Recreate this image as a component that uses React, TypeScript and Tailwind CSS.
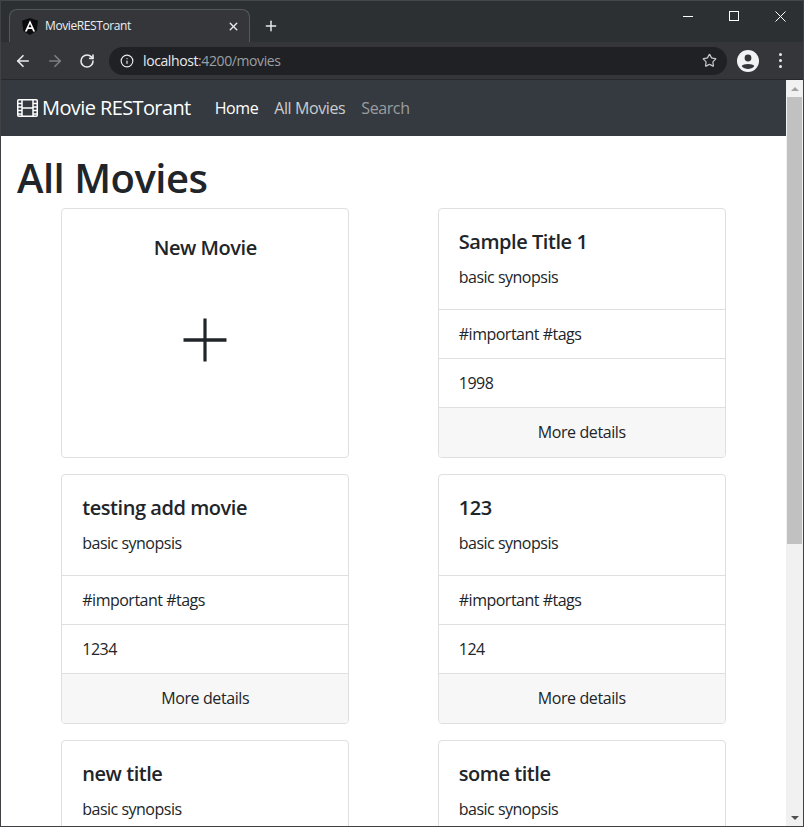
import React from 'react';
import { ArrowLeft, ArrowRight, RotateCw, Info, Star, X, Plus } from 'lucide-react';

type Movie = { title: string; year: string };

const movies: Movie[] = [
  { title: 'Sample Title 1', year: '1998' },
  { title: 'testing add movie', year: '1234' },
  { title: '123', year: '124' },
  { title: 'new title', year: '2001' },
  { title: 'some title', year: '2002' },
];

function AngularLogo() {
  return (
    <svg width="16" height="17" viewBox="0 0 16 17">
      <path d="M8 0 L16 2.8 L14.7 13 L8 17 L1.3 13 L0 2.8 Z" fill="#0c0c0e" />
      <path d="M8 2.2 L2.9 13.4 H4.9 L5.9 10.9 H10.1 L11.1 13.4 H13.1 Z M8 5.9 L9.5 9.3 H6.5 Z" fill="#fff" fillRule="evenodd" />
    </svg>
  );
}

function FilmIcon() {
  return (
    <svg width="21" height="20" viewBox="0 0 21 20" fill="none">
      <rect x="0.75" y="1.75" width="19.5" height="16.5" rx="1" stroke="#fff" strokeWidth="1.5" />
      <path d="M5 2v16M16 2v16M5 10h11" stroke="#fff" strokeWidth="1.5" />
      <path d="M1 5.5h4M1 9h4M1 12.5h4M1 16h4M16 5.5h4M16 9h4M16 12.5h4M16 16h4" stroke="#fff" strokeWidth="1.4" />
    </svg>
  );
}

function AccountIcon() {
  return (
    <svg width="22" height="22" viewBox="0 0 22 22">
      <circle cx="11" cy="11" r="11" fill="#f1f3f4" />
      <circle cx="11" cy="8" r="3.4" fill="#35363a" />
      <path d="M4.6 16 C6 13.2 16 13.2 17.4 16 C15.6 18.2 13.4 19 11 19 C8.6 19 6.4 18.2 4.6 16 Z" fill="#35363a" />
    </svg>
  );
}

function BrowserChrome() {
  return (
    <div className="shrink-0">
      <div className="h-[42px] bg-[#2d3033] border-t border-[#45484b] flex items-end relative">
        <div className="ml-[8px] w-[241px] h-[33px] bg-[#35363a] rounded-t-lg border border-b-0 border-[#55585b] flex items-center pl-[12px] pr-[9px] text-white">
          <AngularLogo />
          <span className="ml-[7px] text-[12px] tracking-[-0.4px] text-[#eceef0] flex-1">MovieRESTorant</span>
          <X size={13} strokeWidth={2.6} className="text-[#e8eaed]" />
        </div>
        <Plus size={16} strokeWidth={2.2} className="ml-[13px] mb-[8px] text-[#e8eaed]" />
        <div className="ml-auto self-start flex items-center">
          <div className="w-[46px] h-[30px] flex items-center justify-center">
            <div className="w-[10px] h-px bg-white" />
          </div>
          <div className="w-[46px] h-[30px] flex items-center justify-center">
            <div className="w-[10px] h-[10px] border border-white" />
          </div>
          <div className="w-[46px] h-[30px] flex items-center justify-center">
            <svg width="11" height="11" viewBox="0 0 11 11" stroke="#fff" strokeWidth="1">
              <path d="M0.5 0.5l10 10M10.5 0.5l-10 10" />
            </svg>
          </div>
        </div>
      </div>
      <div className="h-[38px] bg-[#35363a] border-b border-[#26282b] flex items-center pl-[13px]">
        <ArrowLeft size={18} strokeWidth={2.2} className="text-[#e8eaed]" />
        <ArrowRight size={18} strokeWidth={2.2} className="ml-[14px] text-[#7d7f82]" />
        <RotateCw size={16} strokeWidth={2.4} className="ml-[15px] text-[#e8eaed]" />
        <div className="ml-[14px] w-[618px] h-[28px] bg-[#202124] rounded-full flex items-center pl-[11px] pr-[10px]">
          <Info size={14} strokeWidth={2} className="text-[#e8eaed]" />
          <span className="ml-[9px] text-[14px] tracking-[-0.4px] text-[#e8eaed] flex-1">
            localhost<span className="text-[#9aa0a6]">:4200/movies</span>
          </span>
          <Star size={15} strokeWidth={2} className="text-[#c4c7c9]" />
        </div>
        <div className="ml-[10px]">
          <AccountIcon />
        </div>
        <div className="ml-[20px] flex flex-col gap-[3px]">
          <span className="w-[3px] h-[3px] rounded-full bg-[#e8eaed]" />
          <span className="w-[3px] h-[3px] rounded-full bg-[#e8eaed]" />
          <span className="w-[3px] h-[3px] rounded-full bg-[#e8eaed]" />
        </div>
      </div>
    </div>
  );
}

function Navbar() {
  return (
    <nav className="h-[56px] bg-[#343a40] flex items-center pl-[16px] shrink-0">
      <FilmIcon />
      <span className="ml-[4px] text-[20px] tracking-[-0.6px] text-white">Movie RESTorant</span>
      <span className="ml-[24px] text-[16px] tracking-[-0.4px] text-white">Home</span>
      <span className="ml-[16px] text-[16px] tracking-[-0.4px] text-white/75">All Movies</span>
      <span className="ml-[16px] text-[16px] tracking-[-0.4px] text-white/50">Search</span>
    </nav>
  );
}

function NewMovieCard() {
  return (
    <div className="w-[288px] h-[250px] bg-white border border-[#dfdfdf] rounded-[4px] pt-[20px] flex flex-col items-center">
      <h5 className="text-[20px] leading-[38px] font-[560] tracking-[-0.45px] text-[#212529]">New Movie</h5>
      <svg className="mt-[51px]" width="44" height="44" viewBox="0 0 44 44" stroke="#212529" fill="none">
        <path d="M0.5 22h43" strokeWidth="3.6" />
        <path d="M22 0.5v43" strokeWidth="3.2" />
      </svg>
    </div>
  );
}

function MovieCard({ movie }: { movie: Movie }) {
  return (
    <div className="w-[288px] h-[250px] bg-white border border-[#dfdfdf] rounded-[4px] flex flex-col overflow-hidden text-[#212529] tracking-[-0.5px]">
      <div className="p-[20px] h-[100px] shrink-0">
        <h5 className="text-[20px] leading-[24px] font-[560] tracking-[-0.45px] pt-px mb-[11px]">{movie.title}</h5>
        <p className="text-[16px] leading-[24px]">basic synopsis</p>
      </div>
      <div className="border-t border-[#dfdfdf] h-[49px] px-[20px] py-[12px] text-[16px] leading-[24px] shrink-0">#important #tags</div>
      <div className="border-t border-[#dfdfdf] h-[49px] px-[20px] py-[12px] text-[16px] leading-[24px] shrink-0">{movie.year}</div>
      <div className="border-t border-[#dfdfdf] bg-[#f7f7f7] flex-1 flex items-center justify-center pb-[2px] text-[16px] tracking-[-0.4px]">More details</div>
    </div>
  );
}

function Scrollbar() {
  return (
    <div className="w-[17px] shrink-0 bg-[#f1f1f1] flex flex-col items-center">
      <div className="h-[17px] flex items-center justify-center">
        <div className="w-0 h-0 border-x-[4px] border-x-transparent border-b-[4px] border-b-[#a3a3a3]" />
      </div>
      <div className="w-[15px] h-[447px] bg-[#c1c1c1]" />
      <div className="mt-auto h-[17px] flex items-center justify-center">
        <div className="w-0 h-0 border-x-[4px] border-x-transparent border-t-[4px] border-t-[#505050]" />
      </div>
    </div>
  );
}

export default function App() {
  return (
    <div
      className="w-[804px] h-[827px] overflow-hidden flex flex-col bg-white border-x border-b border-[#3f4144]"
      style={{ fontFamily: '"Open Sans", "Noto Sans", sans-serif' }}
    >
      <BrowserChrome />
      <div className="flex-1 flex min-h-0">
        <div className="flex-1 min-w-0 flex flex-col">
          <Navbar />
          <main className="flex-1 overflow-hidden bg-white px-[16px]">
            <h1 className="text-[40px] leading-[48px] font-[560] text-[#212529] mt-[18px] mb-[6px] tracking-[-0.5px]">All Movies</h1>
            <div className="grid grid-cols-2 gap-y-[16px] justify-items-center">
              <NewMovieCard />
              {movies.map((m) => (
                <MovieCard key={m.title} movie={m} />
              ))}
            </div>
          </main>
        </div>
        <Scrollbar />
      </div>
    </div>
  );
}
